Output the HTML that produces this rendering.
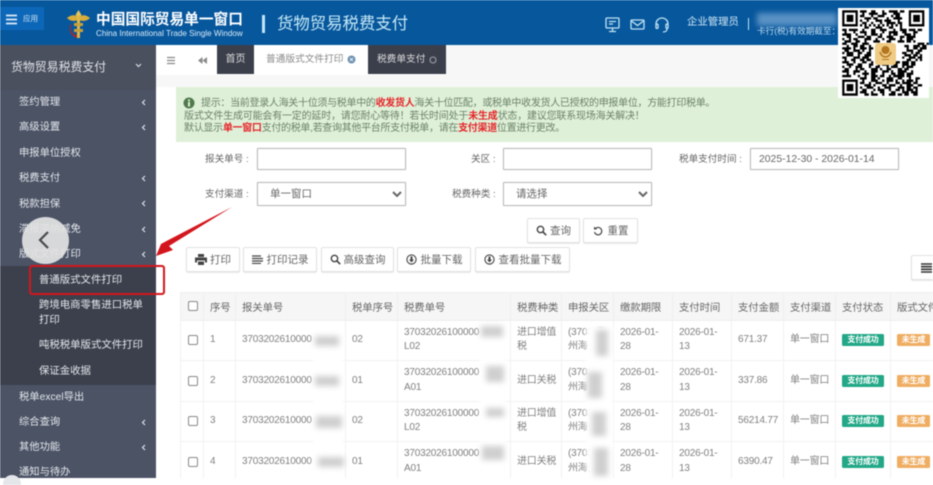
<!DOCTYPE html>
<html lang="zh-CN">
<head>
<meta charset="utf-8">
<title>货物贸易税费支付</title>
<style>
html,body{margin:0;padding:0;width:933px;height:485px;overflow:hidden;background:#fff}
*{box-sizing:border-box}
#page{position:relative;width:933px;height:485px;overflow:hidden;background:#fff;font-family:"Liberation Sans","Noto Sans CJK SC",sans-serif;filter:blur(.5px)}
.a{position:absolute;white-space:nowrap}
.head{left:0;top:0;width:933px;height:45px;background:#07579d}
.menu{left:19px;color:#e4e7ec;font-size:10.3px;line-height:14px}
.sub{left:39px;color:#e4e7ec;font-size:10.4px;line-height:14px}
.chev{left:141px;width:5px;height:7px}
.lbl{color:#666;font-size:9.6px;line-height:14px}
.inp{background:#fff;border:1px solid #bbb;box-shadow:0 0 1px #ccc;border-radius:1px}
select.inp{font:10.5px "Liberation Sans","Noto Sans CJK SC",sans-serif;color:#666;padding:0 0 0 8px;margin:0}
.btn{background:#fff;border:1px solid #e2e2e2;border-radius:2px;box-shadow:0 1px 1px #e8e8e8;color:#666;font-size:10.5px;display:flex;align-items:center;justify-content:center;gap:3px}
.alert{left:176px;top:87px;width:757px;height:55px;background:#dff0d8}
.al{color:#6a8268;font-size:10px;line-height:13px}
.al b{color:#e5262a;font-weight:700}
table{position:absolute;left:180px;top:291.5px;width:753px;border-collapse:collapse;table-layout:fixed;font-size:10px;color:#808080;letter-spacing:-.2px}
th{height:28px;background:#f6f6f6;font-weight:400;color:#666;text-align:left;padding:0 0 0 6px;font-size:10.4px;letter-spacing:-.1px;border:1px solid #efefef;white-space:nowrap;overflow:hidden}
td{height:40.5px;padding:0 0 0 6px;line-height:14.5px;border:1px solid #f1f1f1;overflow:hidden;vertical-align:middle}
.cb{display:block;width:10px;height:10px;border:1px solid #888;border-radius:2px;margin-left:1px;background:#fff}
.bd{display:block;width:42px;height:12px;line-height:12px;border-radius:1.5px;background:#22a887;color:#fff;font-size:8px;font-weight:700;text-align:center}
.bo{width:33px;background:#efad62;margin-left:0}
.mask{position:absolute;background:#cfcfcf;filter:blur(3px)}
.wm{position:absolute;background:#fff;filter:blur(2px)}
</style>
</head>
<body>
<div id="page">
  <!-- header -->
  <div class="a head"></div>
  <div class="a" style="left:0;top:7px;width:44px;height:23px;background:#0d67b8"></div>
  <svg class="a" style="left:6px;top:14px" width="11" height="11"><path d="M0 1.500h11M0 5.500h11M0 9.500h11" stroke="#dcecf8" stroke-width="1.700"/></svg>
  <div class="a" style="left:23px;top:14px;font-size:7.500px;line-height:10px;color:#cfe4f5">应用</div>
  <svg class="a" style="left:66px;top:9px" width="25" height="30" viewBox="0 0 25 30">
    <path d="M1 9C6 5 9 6 12.500 8 16 6 19 5 24 9 20 13 16 12 12.500 11 9 12 5 13 1 9Z" fill="#d9ad3b"/>
    <path d="M12.500 1l3 5-3 3-3-3z" fill="#e6c55a"/>
    <path d="M4 16A10 10 0 0 0 11 29L11 26A7 7 0 0 1 6 15Z" fill="#9c2b35"/>
    <rect x="11" y="6" width="3" height="23" fill="#e0b84a"/>
    <path d="M8 14h9v3H8zM8 20h9v3H8z" fill="#c9a13a"/>
  </svg>
  <div class="a" style="left:96px;top:11px;font-size:14.700px;line-height:19px;font-weight:700;color:#fff">中国国际贸易单一窗口</div>
  <div class="a" style="left:96px;top:29px;font-size:8.100px;line-height:10px;color:#d9ecf8">China International Trade Single Window</div>
  <div class="a" style="left:262px;top:15px;width:2.500px;height:18px;background:#bfe6f6"></div>
  <div class="a" style="left:277px;top:13px;font-size:16.400px;line-height:22px;color:#c6e9f6">货物贸易税费支付</div>
  <svg class="a" style="left:604px;top:16px" width="68" height="18" viewBox="0 0 68 18" fill="none" stroke="#bfe3f4" stroke-width="1.300">
    <rect x="2" y="2" width="13" height="10" rx="1"/><path d="M8.500 12v3M5 15.500h7M5 5.500h7M5 8h4"/>
    <rect x="27" y="4" width="13" height="9" rx="1"/><path d="M27.500 5l6 4.500 6-4.500"/>
    <path d="M52 11V8a6 6 0 0 1 12 0v3M52 8v4a1.500 1.500 0 0 0 2 0V8.500a1.500 1.500 0 0 0-2 0M64 8v4a1.500 1.500 0 0 1-2 0V8.500a1.500 1.500 0 0 1 2 0M63 13c0 2-2 3-4 3"/>
  </svg>
  <div class="a" style="left:687px;top:16px;font-size:10.400px;line-height:14px;color:#cfe7f5">企业管理员</div>
  <div class="a" style="left:748px;top:18px;width:1px;height:12px;background:#bfe3f4"></div>
  <div class="a" style="left:757px;top:13px;width:80px;height:13px;background:#5a92c4;filter:blur(3px)"></div>
  <div class="a" style="left:757px;top:26px;font-size:8.600px;line-height:11px;color:#bcd9ec">卡行(税)有效期截至：</div>

  <!-- sidebar -->
  <div class="a" style="left:0;top:45px;width:156px;height:433px;background:#4b5365"></div>
  <div class="a" style="left:0;top:45px;width:156px;height:45px;background:#4a505e"></div>
  <div class="a" style="left:0;top:266px;width:156px;height:119px;background:#3b404c"></div>
  <div class="a" style="left:11px;top:59px;font-size:11.900px;line-height:16px;color:#dfe2e7">货物贸易税费支付</div>
  <svg class="a" style="left:135px;top:63px" width="7" height="5"><path d="M1 1l2.500 2.500L6 1" fill="none" stroke="#d8dbe0" stroke-width="1.200"/></svg>
  <div class="a menu" style="top:96px">签约管理</div>
  <div class="a menu" style="top:121px">高级设置</div>
  <div class="a menu" style="top:147px">申报单位授权</div>
  <div class="a menu" style="top:172px">税费支付</div>
  <div class="a menu" style="top:198px">税款担保</div>
  <div class="a menu" style="top:223px">滞报滞纳减免</div>
  <div class="a menu" style="top:248px">版式文件打印</div>
  <svg class="a chev" style="top:99px" viewBox="0 0 5 7"><path d="M4 1L1.500 3.500 4 6" fill="none" stroke="#dfe2e7" stroke-width="1.200"/></svg>
  <svg class="a chev" style="top:124px" viewBox="0 0 5 7"><path d="M4 1L1.500 3.500 4 6" fill="none" stroke="#dfe2e7" stroke-width="1.200"/></svg>
  <svg class="a chev" style="top:175px" viewBox="0 0 5 7"><path d="M4 1L1.500 3.500 4 6" fill="none" stroke="#dfe2e7" stroke-width="1.200"/></svg>
  <svg class="a chev" style="top:200px" viewBox="0 0 5 7"><path d="M4 1L1.500 3.500 4 6" fill="none" stroke="#dfe2e7" stroke-width="1.200"/></svg>
  <svg class="a chev" style="top:226px" viewBox="0 0 5 7"><path d="M4 1L1.500 3.500 4 6" fill="none" stroke="#dfe2e7" stroke-width="1.200"/></svg>
  <svg class="a chev" style="top:251px" viewBox="0 0 5 7"><path d="M4 1L1.500 3.500 4 6" fill="none" stroke="#dfe2e7" stroke-width="1.200"/></svg>
  <div class="a sub" style="top:274px">普通版式文件打印</div>
  <div class="a sub" style="top:299px">跨境电商零售进口税单</div>
  <div class="a sub" style="top:314px">打印</div>
  <div class="a sub" style="top:339px">吨税税单版式文件打印</div>
  <div class="a sub" style="top:365px">保证金收据</div>
  <div class="a menu" style="top:391px">税单excel导出</div>
  <div class="a menu" style="top:416px">综合查询</div>
  <div class="a menu" style="top:441px">其他功能</div>
  <div class="a menu" style="top:466px">通知与待办</div>
  <svg class="a chev" style="top:419px" viewBox="0 0 5 7"><path d="M4 1L1.500 3.500 4 6" fill="none" stroke="#dfe2e7" stroke-width="1.200"/></svg>
  <svg class="a chev" style="top:444px" viewBox="0 0 5 7"><path d="M4 1L1.500 3.500 4 6" fill="none" stroke="#dfe2e7" stroke-width="1.200"/></svg>
  <div class="a" style="left:0;top:478px;width:933px;height:7px;background:#fff"></div>
  <div class="a" style="left:3px;top:475px;width:18px;height:18px;border-radius:50%;background:#e4e6ea"></div>

  <!-- tabs -->
  <div class="a" style="left:156px;top:45px;width:777px;height:42px;background:#f7f7f7"></div>
  <div class="a" style="left:156px;top:45px;width:290px;height:30px;background:#fff"></div>
  <svg class="a" style="left:166px;top:56px" width="10" height="9"><path d="M1 1.500h8M1 4.500h8M1 7.500h8" stroke="#888" stroke-width="1.200"/></svg>
  <svg class="a" style="left:197px;top:56px" width="11" height="9"><path d="M5.500 1v7L1 4.500zM10 1v7L5.500 4.500z" fill="#8a8a8a"/></svg>
  <div class="a" style="left:217px;top:45px;width:37px;height:29px;background:#3b3f4b;color:#ddd;font-size:10px;line-height:29px;text-align:center">首页</div>
  <div class="a" style="left:266px;top:53px;font-size:9.700px;line-height:13px;color:#8a8a8a">普通版式文件打印</div>
  <svg class="a" style="left:347px;top:55px" width="9" height="9"><circle cx="4.500" cy="4.500" r="4" fill="#6f93b3"/><path d="M3 3l3 3M6 3l-3 3" stroke="#fff" stroke-width=".8"/></svg>
  <div class="a" style="left:368px;top:45px;width:78px;height:29px;background:#3b3f4b"></div>
  <div class="a" style="left:377px;top:53px;font-size:9.700px;line-height:13px;color:#ddd">税费单支付</div>
  <svg class="a" style="left:429px;top:56px" width="8" height="8"><circle cx="4" cy="4" r="3" fill="none" stroke="#8b8f99" stroke-width="1.300"/></svg>

  <!-- alert -->
  <div class="a alert"></div>
  <svg class="a" style="left:183px;top:97px" width="12" height="12"><circle cx="6" cy="6" r="5.500" fill="#4f7a4c"/><rect x="5" y="5" width="2" height="4.500" fill="#dff0d8"/><rect x="5" y="2.500" width="2" height="1.700" fill="#dff0d8"/></svg>
  <div class="a al" style="left:201px;top:97px;letter-spacing:-.3px">提示：当前登录人海关十位须与税单中的<b>收发货人</b>海关十位匹配，或税单中收发货人已授权的申报单位，方能打印税单。</div>
  <div class="a al" style="left:184px;top:109.500px;letter-spacing:-.2px">版式文件生成可能会有一定的延时，请您耐心等待！若长时间处于<b>未生成</b>状态，建议您联系现场海关解决！</div>
  <div class="a al" style="left:184px;top:122px;letter-spacing:-.3px">默认显示<b>单一窗口</b>支付的税单,若查询其他平台所支付税单，请在<b>支付渠道</b>位置进行更改。</div>

  <!-- form -->
  <div class="a lbl" style="left:205px;top:153px">报关单号 :</div>
  <div class="a inp" style="left:257px;top:148px;width:149px;height:22px"></div>
  <div class="a lbl" style="left:471px;top:153px">关区 :</div>
  <div class="a inp" style="left:503px;top:148px;width:149px;height:22px"></div>
  <div class="a lbl" style="left:679px;top:153px">税单支付时间 :</div>
  <div class="a inp" style="left:750px;top:148px;width:149px;height:22px;font-size:10.400px;line-height:21px;color:#666;padding-left:8px">2025-12-30 - 2026-01-14</div>
  <div class="a lbl" style="left:205px;top:188px">支付渠道 :</div>
  <select class="a inp" style="left:257px;top:182px;width:149px;height:24px"><option>单一窗口</option></select>
  <div class="a lbl" style="left:452px;top:188px">税费种类 :</div>
  <select class="a inp" style="left:503px;top:182px;width:149px;height:24px"><option>请选择</option></select>

  <div class="a btn" style="left:527px;top:218px;width:53px;height:25px"><svg width="11" height="11"><circle cx="4.500" cy="4.500" r="3.200" fill="none" stroke="#444" stroke-width="1.400"/><path d="M7 7l3.200 3.200" stroke="#444" stroke-width="1.600"/></svg>查询</div>
  <div class="a btn" style="left:583px;top:218px;width:55px;height:25px;gap:5px"><svg width="10" height="10"><path d="M2.500 2.500A3.700 3.700 0 1 1 1.500 6" fill="none" stroke="#444" stroke-width="1.200"/><path d="M1 0.500v3h3z" fill="#444"/></svg>重置</div>
  <div class="a btn" style="left:186px;top:247px;width:54px;height:25px"><svg width="12" height="11"><path d="M3 0h6v3H3zM0 3.500h12v5H10V6.500H2v2H0zM3 7.500h6V11H3z" fill="#444"/></svg>打印</div>
  <div class="a btn" style="left:243px;top:247px;width:74px;height:25px;gap:4px"><svg width="11" height="9"><path d="M0 1h9M0 3.500h11M0 6h11M0 8.500h9" stroke="#444" stroke-width="1.200"/></svg>打印记录</div>
  <div class="a btn" style="left:321px;top:247px;width:73px;height:25px"><svg width="11" height="11"><circle cx="4.500" cy="4.500" r="3.200" fill="none" stroke="#444" stroke-width="1.400"/><path d="M7 7l3.200 3.200" stroke="#444" stroke-width="1.600"/></svg>高级查询</div>
  <div class="a btn" style="left:397px;top:247px;width:74px;height:25px;gap:4px"><svg width="11" height="11"><circle cx="5.500" cy="5.500" r="4.600" fill="none" stroke="#444" stroke-width="1.100"/><path d="M4.500 2.500h2v3H8L5.500 8.500 3 5.500h1.500z" fill="#444"/></svg>批量下载</div>
  <div class="a btn" style="left:475px;top:247px;width:95px;height:25px;gap:4px"><svg width="11" height="11"><circle cx="5.500" cy="5.500" r="4.600" fill="none" stroke="#444" stroke-width="1.100"/><path d="M4.500 2.500h2v3H8L5.500 8.500 3 5.500h1.500z" fill="#444"/></svg>查看批量下载</div>
  <div class="a btn" style="left:911px;top:255px;width:30px;height:25px;justify-content:flex-start;padding-left:9px"><svg width="11" height="10"><path d="M0 1h11M0 3.700h11M0 6.300h11M0 9h11" stroke="#333" stroke-width="1.600"/></svg></div>

  <!-- table -->
  <table>
    <colgroup><col style="width:23px"><col style="width:32px"><col style="width:110px"><col style="width:52px"><col style="width:113px"><col style="width:51px"><col style="width:52px"><col style="width:59px"><col style="width:59px"><col style="width:52px"><col style="width:52px"><col style="width:55px"><col style="width:43px"></colgroup>
    <tr><th><span class="cb"></span></th><th>序号</th><th>报关单号</th><th>税单序号</th><th>税费单号</th><th>税费种类</th><th>申报关区</th><th>缴款期限</th><th>支付时间</th><th>支付金额</th><th>支付渠道</th><th>支付状态</th><th>版式文件</th></tr>
    <tr><td><span class="cb"></span></td><td>1</td><td>3703202610000</td><td>02</td><td>37032026100000<br>L02</td><td>进口增值<br>税</td><td>(3703)青<br>州海关</td><td>2026-01-<br>28</td><td>2026-01-<br>13</td><td>671.37</td><td>单一窗口</td><td><span class="bd">支付成功</span></td><td><span class="bd bo">未生成</span></td></tr>
    <tr><td><span class="cb"></span></td><td>2</td><td>3703202610000</td><td>01</td><td>37032026100000<br>A01</td><td>进口关税</td><td>(3703)青<br>州海关</td><td>2026-01-<br>28</td><td>2026-01-<br>13</td><td>337.86</td><td>单一窗口</td><td><span class="bd">支付成功</span></td><td><span class="bd bo">未生成</span></td></tr>
    <tr><td><span class="cb"></span></td><td>3</td><td>3703202610000</td><td>02</td><td>37032026100000<br>L02</td><td>进口增值<br>税</td><td>(3703)青<br>州海关</td><td>2026-01-<br>28</td><td>2026-01-<br>13</td><td>56214.77</td><td>单一窗口</td><td><span class="bd">支付成功</span></td><td><span class="bd bo">未生成</span></td></tr>
    <tr><td><span class="cb"></span></td><td>4</td><td>3703202610000</td><td>01</td><td>37032026100000<br>A01</td><td>进口关税</td><td>(3703)青<br>州海关</td><td>2026-01-<br>28</td><td>2026-01-<br>13</td><td>6390.47</td><td>单一窗口</td><td><span class="bd">支付成功</span></td><td><span class="bd bo">未生成</span></td></tr>
  </table>
  <div class="a" style="left:156px;top:478px;width:777px;height:7px;background:#fff"></div>

  <!-- blurred redactions -->
  <div class="wm" style="left:313px;top:325px;width:30px;height:150px"></div>
  <div class="mask" style="left:315px;top:336px;width:24px;height:10px"></div>
  <div class="mask" style="left:315px;top:376px;width:24px;height:10px"></div>
  <div class="mask" style="left:316px;top:416px;width:26px;height:12px"></div>
  <div class="mask" style="left:318px;top:457px;width:26px;height:10px"></div>
  <div class="wm" style="left:480px;top:325px;width:26px;height:150px"></div>
  <div class="mask" style="left:481px;top:326px;width:22px;height:11px"></div>
  <div class="mask" style="left:486px;top:366px;width:18px;height:16px"></div>
  <div class="mask" style="left:486px;top:408px;width:18px;height:9px"></div>
  <div class="mask" style="left:482px;top:446px;width:22px;height:14px"></div>
  <div class="wm" style="left:586px;top:325px;width:27px;height:150px"></div>
  <div class="mask" style="left:596px;top:330px;width:12px;height:26px"></div>
  <div class="mask" style="left:588px;top:372px;width:14px;height:26px"></div>
  <div class="mask" style="left:592px;top:412px;width:14px;height:24px"></div>
  <div class="mask" style="left:594px;top:448px;width:14px;height:28px"></div>

  <!-- circular back button -->
  <div class="a" style="left:22px;top:217px;width:47px;height:47px;border-radius:50%;background:rgba(226,226,226,.93)"></div>
  <svg class="a" style="left:36px;top:229px" width="16" height="22"><path d="M12 3L4 11l8 8" fill="none" stroke="#4a4a4a" stroke-width="2.200"/></svg>

  <!-- red highlight + arrow -->
  <div class="a" style="left:29px;top:265px;width:136px;height:30px;border:2.500px solid #d3161d;border-radius:3px"></div>
  <svg class="a" style="left:150px;top:200px" width="90" height="65" viewBox="0 0 90 65"><path d="M82 7L19 46 23 50 6 56 11 44 16.500 41z" fill="#d3161d"/></svg>

  <!-- QR code -->
  <svg class="a" style="left:838px;top:8px" width="91" height="90" viewBox="-1.900 -1 41 39" preserveAspectRatio="none">
    <rect x="-1.900" y="-1" width="41" height="39" fill="#fff"/>
    <path fill="none" stroke="#000" stroke-width="1" d="
    M.5 .5h6v6h-6zM30.500 .5h6v6h-6zM.5 30.500h6v6h-6z" />
    <path fill="#000" d="M2 2h3v3H2zM32 2h3v3h-3zM2 32h3v3H2z"/>
    <path fill="none" stroke="#000" stroke-width="1" d="
    M8 .5h3m2 0h2m3 0h1m2 0h4m1 0h2
    M9 1.500h1m2 0h4m2 0h2m3 0h3
    M8 2.500h2m3 0h1m2 0h3m3 0h1m1 0h2
    M10 3.500h3m1 0h2m4 0h1m2 0h4
    M8 4.500h1m2 0h1m3 0h3m1 0h3m3 0h1
    M9 5.500h2m2 0h1m3 0h1m2 0h4m1 0h2
    M8 6.500h1m1 0h1m1 0h1m1 0h1m1 0h1m1 0h1m1 0h1m1 0h1m1 0h1m1 0h1
    M10 7.500h2m3 0h3m3 0h2m3 0h1
    M0 8.500h2m1 0h4m2 0h1m3 0h2m2 0h3m3 0h1m2 0h3m1 0h3m1 0h2
    M1 9.500h1m3 0h1m2 0h3m2 0h2m3 0h1m2 0h4m2 0h2m3 0h2
    M0 10.500h4m2 0h1m3 0h1m2 0h3m1 0h1m3 0h1m1 0h2m3 0h3m1 0h1
    M2 11.500h2m3 0h3m1 0h2m3 0h2m2 0h3m3 0h2m1 0h4
    M0 12.500h1m2 0h1m1 0h2m3 0h3m2 0h1m2 0h1m2 0h3m2 0h1m2 0h3
    M1 13.500h3m2 0h2m2 0h1m3 0h3m3 0h2m3 0h3m1 0h2m1 0h1
    M0 14.500h2m2 0h3m2 0h3m22 0h3m1 0h1
    M2 15.500h1m2 0h2m1 0h2m2 0h1m15 0h2m2 0h3m1 0h2
    M0 16.500h4m1 0h1m2 0h3m1 0h2m15 0h1m2 0h2m1 0h3
    M1 17.500h2m2 0h3m1 0h1m2 0h1m16 0h3m2 0h2
    M0 18.500h1m1 0h3m2 0h2m2 0h2m14 0h2m2 0h1m1 0h2
    M2 19.500h3m2 0h1m2 0h3m15 0h3m1 0h2m1 0h1
    M0 20.500h2m3 0h3m1 0h3m15 0h1m2 0h3m1 0h2
    M1 21.500h1m2 0h2m2 0h2m1 0h2m16 0h2m2 0h1m1 0h1
    M0 22.500h3m2 0h1m3 0h2m2 0h1m2 0h3m1 0h2m2 0h2m1 0h3m1 0h2
    M2 23.500h3m2 0h2m3 0h2m2 0h1m1 0h3m2 0h2m2 0h3m1 0h2
    M0 24.500h1m2 0h1m2 0h3m3 0h1m2 0h2m3 0h1m1 0h3m2 0h1m1 0h3
    M1 25.500h2m3 0h1m1 0h2m3 0h3m1 0h1m2 0h2m3 0h2m1 0h2
    M0 26.500h3m2 0h3m2 0h1m2 0h3m2 0h3m1 0h1m2 0h4m2 0h1
    M2 27.500h1m2 0h1m3 0h3m1 0h2m3 0h1m3 0h2m1 0h3m1 0h3
    M0 28.500h4m3 0h1m2 0h1m2 0h3m1 0h2m2 0h1m1 0h5m1 0h2
    M8 29.500h3m2 0h2m1 0h1m3 0h3m2 0h2m3 0h1m2 0h2
    M9 30.500h1m3 0h3m2 0h1m1 0h3m1 0h1m2 0h1m1 0h3m1 0h1
    M8 31.500h2m2 0h1m2 0h3m2 0h1m3 0h2m1 0h4m1 0h2
    M10 32.500h3m1 0h1m3 0h2m1 0h3m2 0h1m2 0h3m2 0h2
    M8 33.500h1m2 0h3m2 0h1m2 0h3m3 0h3m1 0h2m1 0h2
    M9 34.500h2m3 0h1m1 0h3m2 0h1m2 0h2m1 0h1m1 0h3m1 0h1
    M8 35.500h3m2 0h1m3 0h2m3 0h2m3 0h3m1 0h3
    M10 36.500h2m1 0h3m2 0h1m2 0h3m1 0h2m1 0h2m2 0h2"/>
  </svg>
  <div class="a" style="left:875px;top:43px;width:21px;height:22px;border-radius:3px;background:#efcb85"></div>
  <svg class="a" style="left:879px;top:45px" width="13" height="16" viewBox="0 0 13 16"><path d="M6.500 1a4 4 0 1 1-.01 0z" fill="#b3761f"/><path d="M1 7c1 4 4 5 5.500 5S11 11 12 7" fill="none" stroke="#b3761f" stroke-width="1.500"/><path d="M3 14.500h7" stroke="#b3761f" stroke-width="1"/></svg>
</div>
</body>
</html>
